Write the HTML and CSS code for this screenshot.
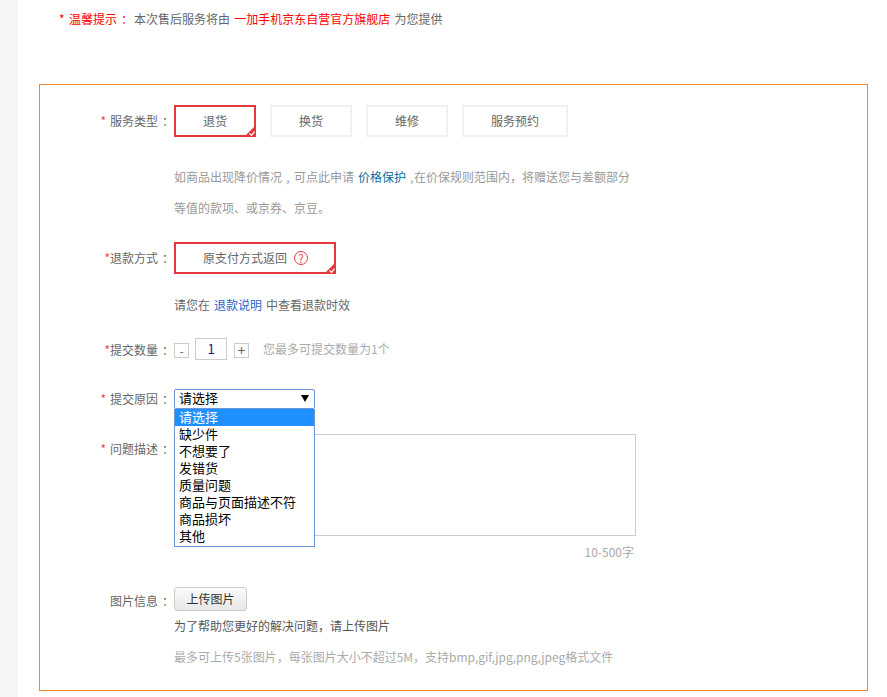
FILE: index.html
```html
<!DOCTYPE html>
<html lang="zh-CN">
<head>
<meta charset="utf-8">
<title>申请售后</title>
<link rel="stylesheet" href="styles.css">
</head>
<body>
<aside class="strip"></aside>
<main class="main">
  <p class="notice"><span class="red">* 温馨提示<span class="colon colon-notice">：</span></span>本次售后服务将由 <span class="red">一加手机京东自营官方旗舰店</span> 为您提供</p>
  <form class="box">
    <div class="row">
      <div class="label label-tall"><span class="star">*</span> 服务类型<span class="colon">：</span></div>
      <div class="options">
        <button type="button" class="opt opt-sel">退货<svg class="tick" viewBox="0 0 12 12"><path d="M12 0V12H0Z" fill="#e4393c"/><path d="M5.5 8.5l2 1.8 3-3.6" fill="none" stroke="#fff" stroke-width="1.3"/></svg></button>
        <button type="button" class="opt">换货</button>
        <button type="button" class="opt">维修</button>
        <button type="button" class="opt opt-wide">服务预约</button>
      </div>
    </div>
    <div class="hint-block">如商品出现降价情况<span class="comma">,</span>可点此申请 <a class="link-teal">价格保护</a> <span class="comma-tight">,</span>在价保规则范围内，将赠送您与差额部分<br>等值的款项、或京券、京豆。</div>
    <div class="row row-refund">
      <div class="label label-tall"><span class="star">*</span>退款方式<span class="colon">：</span></div>
      <button type="button" class="opt opt-sel opt-refund">原支付方式返回<span class="help">?</span><svg class="tick" viewBox="0 0 12 12"><path d="M12 0V12H0Z" fill="#e4393c"/><path d="M5.5 8.5l2 1.8 3-3.6" fill="none" stroke="#fff" stroke-width="1.3"/></svg></button>
    </div>
    <div class="content refund-note">请您在 <a class="link-blue">退款说明</a> 中查看退款时效</div>
    <div class="row row-qty">
      <div class="label label-qty"><span class="star">*</span>提交数量<span class="colon">：</span></div>
      <div class="qty">
        <span class="step">-</span>
        <span class="qty-num">1</span>
        <span class="step step-plus">+</span>
        <span class="qty-hint">您最多可提交数量为1个</span>
      </div>
    </div>
    <div class="row row-reason">
      <div class="label label-reason"><span class="star">*</span> 提交原因<span class="colon">：</span></div>
      <div class="select">
        <span>请选择</span><i class="caret"></i>
        <ul class="dropdown">
          <li class="active">请选择</li>
          <li>缺少件</li>
          <li>不想要了</li>
          <li>发错货</li>
          <li>质量问题</li>
          <li>商品与页面描述不符</li>
          <li>商品损坏</li>
          <li>其他</li>
        </ul>
      </div>
    </div>
    <div class="row row-desc">
      <div class="label label-desc"><span class="star">*</span> 问题描述<span class="colon">：</span></div>
      <textarea class="desc"></textarea>
    </div>
    <div class="content counter">10-500字</div>
    <div class="row row-upload">
      <div class="label label-upload">图片信息<span class="colon">：</span></div>
      <button type="button" class="upload">上传图片</button>
    </div>
    <div class="content upload-help">为了帮助您更好的解决问题，请上传图片</div>
    <div class="content upload-limit">最多可上传5张图片，每张图片大小不超过5M，支持bmp,gif,jpg,png,jpeg格式文件</div>
  </form>
</main>
</body>
</html>
```
FILE: styles.css
```css
* { box-sizing: border-box; }
html, body { height: 697px; overflow: hidden; }
body {
  margin: 0;
  display: flex;
  background: #fff;
  color: #666;
  font: 12px/16px "Noto Sans CJK SC", "Liberation Sans", sans-serif;
  word-spacing: 1.3px;
}
.strip { width: 18px; flex: none; background: #f5f5f5; }
.main { flex: 1; padding: 0 19px 0 21px; min-width: 0; }
.notice { margin: 0 0 46px; padding-left: 20px; height: 38px; line-height: 38px; word-spacing: 1.6px; }
.red { color: #f00; }
.colon { display: inline-block; width: 12px; text-indent: 4px; white-space: nowrap; text-align: left; }
.colon-notice { width: 17px; }
.box {
  border: 1px solid #f08a2c;
  height: 607px;
  padding-top: 20px;
}
.row { display: flex; align-items: flex-start; }
.label { width: 134px; flex: none; text-align: right; padding-right: 4px; }
.star { color: #f0443f; }
.label-tall { line-height: 32px; }
.label-qty { line-height: 22px; padding-top: 1px; height: 22px; }
.label-reason { line-height: 20px; height: 20px; }
.label-desc { padding-top: 7px; }
.label-upload { padding-top: 6px; }
.options { display: flex; gap: 14px; }
.opt {
  position: relative;
  width: 82px;
  height: 32px;
  padding: 0;
  border: 2px solid #f0f0f0;
  background: #fff;
  color: #666;
  font: inherit;
}
.opt-wide { width: 106px; }
.opt-sel { border-color: #e4393c; }
.opt-refund { width: 162px; text-align: left; padding-left: 27px; display: flex; align-items: center; }
.tick { position: absolute; right: -2px; bottom: -2px; width: 12px; height: 12px; }
.help {
  width: 14px;
  height: 14px;
  margin-left: 7px;
  border: 1px solid #e4393c;
  border-radius: 50%;
  color: #e4393c;
  font-size: 11px;
  line-height: 12px;
  text-align: center;
}
.hint-block { margin: 24px 0 0 134px; line-height: 31px; color: #999; }
.comma { display: inline-block; width: 12px; text-align: center; }
.comma-tight { display: inline-block; width: 4px; }
.link-teal { color: #0a6c9f; }
.link-blue { color: #1b66c9; }
.content { margin-left: 134px; }
.row-refund { margin-top: 19px; }
.refund-note { margin-top: 21px; line-height: 20px; color: #666; }
.row-qty { margin-top: 23px; }
.qty { display: flex; align-items: center; height: 22px; }
.step {
  width: 15px;
  height: 15px;
  border: 1px solid #ccc;
  text-align: center;
  line-height: 13px;
  color: #666;
  margin-top: 2px;
}
.step-plus { margin-left: 7px; font-size: 14px; }
.qty-num {
  width: 32px;
  height: 22px;
  margin-left: 6px;
  border: 1px solid #ccc;
  text-align: center;
  line-height: 20px;
  color: #1a0d8a;
  font-size: 13px;
}
.qty-hint { margin-left: 14px; color: #aaa; }
.row-reason { margin-top: 29px; position: relative; z-index: 1; }
.select {
  position: relative;
  width: 141px;
  height: 20px;
  padding-left: 4px;
  border: 1px solid #6c96d8;
  border-radius: 2px;
  background: #fff;
  color: #000;
  font-size: 13px;
  line-height: 16px;
}
.caret {
  position: absolute;
  right: 5px;
  top: 5px;
  border: 4px solid transparent;
  border-top: 7px solid #000;
  border-bottom: 0;
}
.dropdown {
  position: absolute;
  left: -1px;
  top: 19px;
  width: 141px;
  margin: 0;
  padding: 0 0 1px;
  list-style: none;
  border: 1px solid #6c96d8;
  border-top: 0;
  background: #fff;
  font-family: "Liberation Sans", "Noto Sans CJK SC", sans-serif;
}
.dropdown li { height: 17px; padding-left: 4px; line-height: 17px; }
.dropdown .active { background: #1e90ff; color: #fff; }
.row-desc { margin-top: 25px; }
.desc {
  width: 462px;
  height: 102px;
  margin: 0;
  border: 1px solid #ccc;
  resize: none;
  display: block;
}
.counter { margin-top: 8px; width: 460px; text-align: right; color: #aaa; }
.row-upload { margin-top: 27px; }
.upload {
  width: 73px;
  height: 24px;
  padding: 0;
  border: 1px solid #ccc;
  border-radius: 3px;
  background: linear-gradient(#fafafa, #e8e8e8);
  color: #333;
  font: inherit;
  font-size: 12px;
}
.upload-help { margin-top: 7px; color: #555; }
.upload-limit { margin-top: 15px; color: #aaa; }
```
